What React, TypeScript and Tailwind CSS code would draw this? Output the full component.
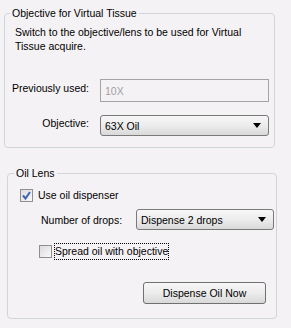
import { useState } from "react";

function Dropdown({ value, width }: any) {
  return (
    <div
      className={
        "h-[21px] flex items-center justify-between rounded-[3px] border border-[#7a7a7a] bg-gradient-to-b from-[#f7f7f7] via-[#ececec] to-[#d9d9d9] pl-[4px] pr-[7px] " +
        width
      }
    >
      <span>{value}</span>
      <svg width="8" height="5" viewBox="0 0 8 5">
        <polygon points="0,0 8,0 4,5" fill="#000" />
      </svg>
    </div>
  );
}

function CheckBox({ checked }: any) {
  return (
    <div className="w-[13px] h-[13px] border border-[#8f8f8f] bg-gradient-to-br from-[#dcdcdc] to-[#f8f8f8] flex items-center justify-center shrink-0">
      {checked && (
        <svg width="9" height="9" viewBox="0 0 9 9">
          <path d="M1 4.5 L3.5 7.5 L8 1" stroke="#3a64b4" strokeWidth="2" fill="none" />
        </svg>
      )}
    </div>
  );
}

function App() {
  const [useOil, setUseOil] = useState<any>(true);

  return (
    <div
      className="w-[291px] h-[328px] bg-[#f5f2f5] text-[10.5px] leading-[14px] text-black overflow-hidden"
      style={{ fontFamily: '"Liberation Sans", Arial, sans-serif' }}
    >
      <fieldset className="ml-[4px] mt-[6px] w-[271px] h-[142px] border border-[#d0d5da] rounded-[4px]">
        <legend className="ml-[5px] px-[2px]">Objective for Virtual Tissue</legend>
        <p className="ml-[10px] mt-[5px] w-[250px]">
          Switch to the objective/lens to be used for Virtual Tissue acquire.
        </p>
        <div className="flex mt-[26px]">
          <div className="w-[84px] text-right pt-[2px]">Previously used:</div>
          <div className="ml-[11px] w-[169px] h-[23px] border border-[#a5a5a5] text-[#a0a0a0] pl-[4px] pt-[4px]">
            10X
          </div>
        </div>
        <div className="flex mt-[13px]">
          <div className="w-[84px] text-right pt-[1px]">Objective:</div>
          <div className="ml-[11px]">
            <Dropdown value="63X Oil" width="w-[169px]" />
          </div>
        </div>
      </fieldset>

      <fieldset className="ml-[7px] mt-[18px] w-[270px] h-[153px] border border-[#d0d5da] rounded-[4px]">
        <legend className="ml-[6px] px-[2px]">Oil Lens</legend>
        <div
          className="flex items-center ml-[12px] mt-[8px] cursor-default"
          onClick={() => setUseOil(!useOil)}
        >
          <CheckBox checked={useOil} />
          <span className="ml-[5px]">Use oil dispenser</span>
        </div>
        <div className="flex items-center mt-[7px]">
          <div className="ml-[33px] w-[95px]">Number of drops:</div>
          <div>
            <Dropdown value="Dispense 2 drops" width="w-[138px]" />
          </div>
        </div>
        <div className="flex items-center ml-[31px] mt-[13px]">
          <CheckBox checked={false} />
          <span className="ml-[2px] border border-dotted border-black leading-[15px]">
            Spread oil with objective
          </span>
        </div>
        <div className="flex justify-end mr-[10px] mt-[22px]">
          <button className="w-[123px] h-[22px] rounded-[3px] border border-[#707070] bg-gradient-to-b from-[#f7f7f7] via-[#ececec] to-[#d9d9d9]">
            Dispense Oil Now
          </button>
        </div>
      </fieldset>
    </div>
  );
}

export default App;
